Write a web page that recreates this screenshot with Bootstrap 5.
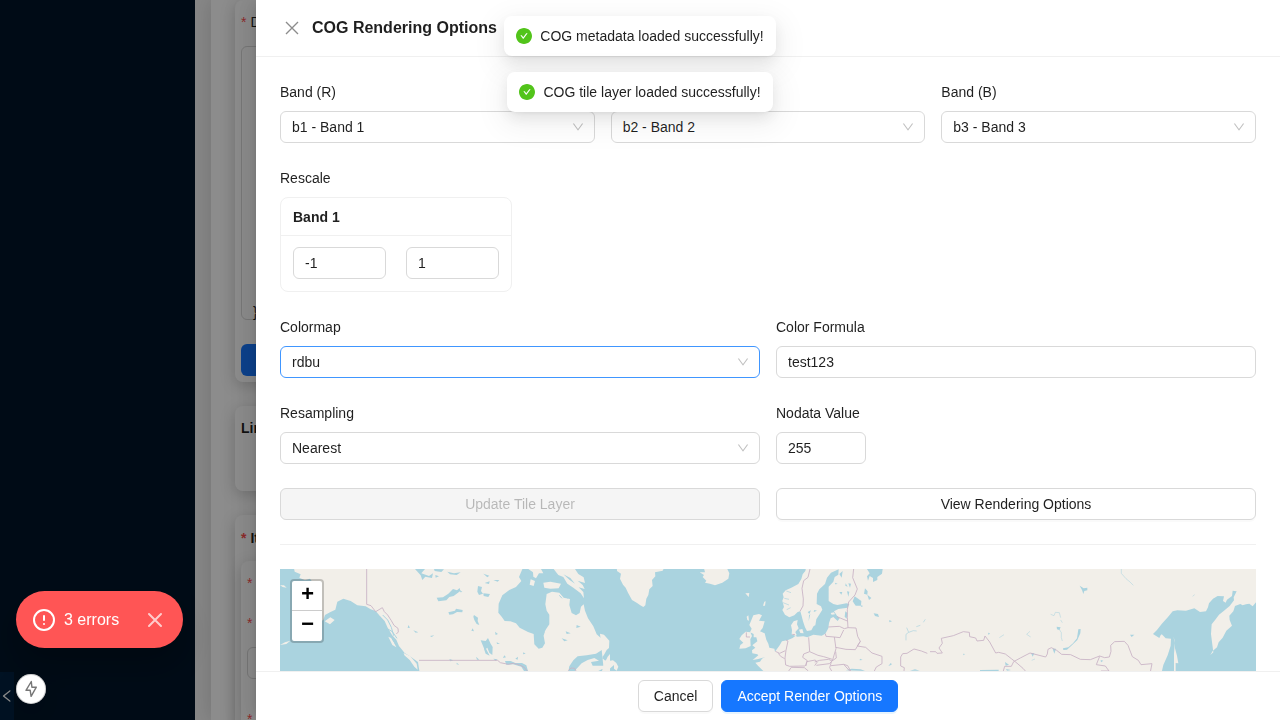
<!DOCTYPE html>
<html lang="en">
<head>
<meta charset="utf-8">
<meta name="viewport" content="width=device-width, initial-scale=1">
<title>COG Rendering Options</title>
<link href="https://cdn.jsdelivr.net/npm/bootstrap@5.3.0/dist/css/bootstrap.min.css" rel="stylesheet">
<style>
:root{--ink:rgba(0,0,0,.88);--line:#d9d9d9;--soft:#f0f0f0}
body{font:14px/22px "Liberation Sans",Arial,sans-serif;color:var(--ink);height:720px;overflow:hidden;background:#f5f5f5}
.sider{width:195px;background:#001529}
.trigger{width:14px;height:48px;background:#002140;color:#fff}
.page{margin-left:16px;background:#fff;box-shadow:0 0 20px rgba(0,0,0,.15);padding-left:24px}
.panel{border-radius:8px;box-shadow:0 4px 16px rgba(0,0,0,.2);background:#fff;padding:0 6px;margin-bottom:24px}
.inner{border-radius:8px;box-shadow:0 4px 16px rgba(0,0,0,.2);padding:9px 6px;height:200px}
.req{color:#ff4d4f;font-family:"Liberation Sans",sans-serif;margin-right:4px}
.field{border:1px solid var(--line);border-radius:6px;background:#fff;height:32px;padding:0 11px}
.dim{background:rgba(0,0,0,.45);z-index:5}
.sheet{left:256px;background:#fff;z-index:6;box-shadow:-6px 0 16px 0 rgba(0,0,0,.08),-3px 0 6px -4px rgba(0,0,0,.12),-9px 0 28px 8px rgba(0,0,0,.05)}
.sheet-head{height:57px;border-bottom:1px solid var(--soft);padding:0 28px 1px}
.sheet-head h1{font-size:16px;line-height:24px;font-weight:700;margin:0 0 0 12px}
.sheet-body{padding:24px 24px 0;min-height:0}
.sheet-foot{height:49px;border-top:1px solid var(--soft)}
.row{--bs-gutter-x:16px}
.item{margin-bottom:24px}
.item>label{display:block;margin-bottom:8px;height:22px}
.pick{display:flex;align-items:center;justify-content:space-between;padding-right:10px}
.pick svg{fill:rgba(0,0,0,.25);width:12px;height:12px}
.pick.hot{border-color:#4096ff}
.band{width:232px;height:95px;border:1px solid var(--soft);border-radius:8px}
.band-head{height:38px;border-bottom:1px solid var(--soft);padding:0 12px;font-weight:700}
.band-body{padding:11px 12px;gap:20px}
.num{line-height:30px}
.btn{font-size:14px;line-height:22px;padding:4px 15px;border-radius:6px;height:32px;--bs-btn-color:var(--ink);--bs-btn-border-color:#d9d9d9;--bs-btn-bg:#fff;box-shadow:0 2px 0 rgba(0,0,0,.02)}
.btn:disabled{opacity:1;background:#f5f5f5;color:rgba(0,0,0,.25);border-color:var(--line);box-shadow:none}
.btn-primary{--bs-btn-bg:#1677ff;--bs-btn-border-color:#1677ff;--bs-btn-color:#fff;box-shadow:0 2px 0 rgba(5,145,255,.1)}
.rule{height:1px;background:var(--soft);margin:24px 0}
.world{height:102px;background:#aad3df}
.zoomer{left:10px;top:10px;width:34px;border:2px solid rgba(0,0,0,.2);border-radius:4px;background-clip:padding-box;background-color:#fff}
.zoomer span{display:block;height:30px;font:bold 22px/30px "Liberation Mono",monospace;text-align:center;text-indent:1px;color:#000}
.zoomer span:first-child{border-bottom:1px solid #ccc}
.notes{top:16px;left:0;right:0;gap:16px;z-index:10}
.note{height:40px;padding:9px 12px;gap:8px;border-radius:8px;background:#fff;box-shadow:0 6px 16px 0 rgba(0,0,0,.08),0 3px 6px -4px rgba(0,0,0,.12),0 9px 28px 8px rgba(0,0,0,.05)}
.note svg{width:16px;height:16px;fill:#52c41a}
.dev{left:16px;top:591px;z-index:12;width:167px}
.errs{height:57px;border-radius:29px;background:#f55;color:#fff;font-size:16px;padding:0 16px;box-shadow:0 16px 32px rgba(0,0,0,.25)}
.bolt{width:30px;height:30px;margin-top:26px;border-radius:50%;background:#fff;box-shadow:0 0 0 1px rgba(120,120,120,.35) inset,0 11px 40px rgba(0,0,0,.25)}
</style>
</head>
<body>
<div class="d-flex h-100 overflow-hidden">
  <aside class="sider flex-shrink-0 d-flex align-items-end">
    <div class="trigger d-flex align-items-center justify-content-center"><svg width="14" height="14" viewBox="64 64 896 896" fill="currentColor"><path d="M724 218.3V141c0-6.7-7.7-10.4-12.9-6.3L260.3 486.8a31.86 31.86 0 000 50.3l450.8 352.1c5.3 4.1 12.9.4 12.9-6.3v-77.3c0-4.900-2.300-9.600-6.100-12.600l-360-281 360-281.100c3.800-3 6.100-7.700 6.100-12.600z"/></svg></div>
  </aside>
  <main class="page flex-grow-1 overflow-hidden">
    <section class="panel" style="height:382px">
      <div style="height:46px;padding-top:11px"><span class="req">*</span>D</div>
      <div class="field" style="height:274px;padding:254px 11px 0">}</div>
      <div class="rounded-2" style="height:32px;margin-top:24px;background:#1677ff"></div>
    </section>
    <section class="panel fw-bold" style="height:85px;padding-top:11px">Lin</section>
    <section class="panel" style="height:300px">
      <div class="fw-bold" style="height:46px;padding-top:12px"><span class="req">*</span>It</div>
      <div class="inner"><div class="req" style="line-height:26px">*</div><div class="req" style="line-height:26px;margin:14px 0 11px">*</div><div class="field"></div><div class="req" style="margin-top:30px;line-height:20px">*</div></div>
    </section>
  </main>
</div>
<div class="dim position-fixed top-0 start-0 w-100 h-100"></div>

<div class="sheet position-fixed top-0 bottom-0 end-0 d-flex flex-column">
  <header class="sheet-head d-flex align-items-center flex-shrink-0">
    <svg width="16" height="16" viewBox="0 0 16 16" stroke="#000" stroke-opacity=".45" stroke-width="1.350"><path d="M2 2 14 14M14 2 2 14"/></svg>
    <h1>COG Rendering Options</h1>
  </header>
  <div class="sheet-body flex-grow-1 overflow-hidden">
    <div class="row">
      <div class="col-4 item"><label>Band (R)</label><div class="field pick">b1 - Band 1<svg viewBox="64 64 896 896"><path id="chev" d="M884 256h-75c-5.100 0-9.900 2.500-12.900 6.600L512 654.200 227.900 262.600c-3-4.100-7.800-6.600-12.900-6.600h-75c-6.500 0-10.300 7.400-6.500 12.700l352.600 486.100c12.800 17.600 39 17.600 51.700 0l352.600-486.100c3.900-5.300.1-12.700-6.400-12.700z"/></svg></div></div>
      <div class="col-4 item"><label></label><div class="field pick">b2 - Band 2<svg viewBox="64 64 896 896"><use href="#chev"/></svg></div></div>
      <div class="col-4 item"><label>Band (B)</label><div class="field pick">b3 - Band 3<svg viewBox="64 64 896 896"><use href="#chev"/></svg></div></div>
    </div>
    <div class="item"><label>Rescale</label>
      <div class="band"><div class="band-head d-flex align-items-center">Band 1</div>
        <div class="band-body d-flex"><div class="field num flex-fill w-50">-1</div><div class="field num flex-fill w-50">1</div></div></div>
    </div>
    <div class="row">
      <div class="col-6 item"><label>Colormap</label><div class="field pick hot">rdbu<svg viewBox="64 64 896 896"><use href="#chev"/></svg></div></div>
      <div class="col-6 item"><label>Color Formula</label><div class="field num">test123</div></div>
      <div class="col-6 item"><label>Resampling</label><div class="field pick">Nearest<svg viewBox="64 64 896 896"><use href="#chev"/></svg></div></div>
      <div class="col-6 item"><label>Nodata Value</label><div class="field num" style="width:90px">255</div></div>
    </div>
    <div class="row">
      <div class="col-6"><button class="btn w-100" disabled>Update Tile Layer</button></div>
      <div class="col-6"><button class="btn w-100">View Rendering Options</button></div>
    </div>
    <div class="rule"></div>
    <div class="world position-relative overflow-hidden">
      <svg width="976" height="102" viewBox="0 0 976 102" class="d-block" fill="#f2efe9" stroke-linejoin="round">
        <!-- North America -->
        <g transform="translate(0 -4) scale(.33333)">
          <path d="M40 0 44 20 62 28 58 38 75 46 90 41 102 58 120 75 122 120 105 150 75 180 90 182 130 165 135 150 150 142 166 134 172 110 190 101 212 108 232 121 257 124 272 133 287 138 299 152 314 168 323 188 336 210 349 224 357 243 374 264 393 276 414 291 420 330H863L868 304 880 286 893 274 920 271 948 266 969 253 984 243 985 235 966 222 950 208 940 184 924 160 915 137 911 118 903 125 899 144 888 151 875 144 868 120 870 102 851 98 838 83 816 80 800 87 796 118 800 137 808 149 808 178 798 193 790 208 795 235 787 248 776 251 763 238 761 207 744 201 719 188 708 175 691 169 674 168 665 155 655 143 656 116 667 91 688 75 708 66 724 48 717 36 728 10 720 0z"/>
          <path d="M745 12 759 22 760 35 768 40 777 25 790 25 783 12zM752 43l13 5-4 15-12-4zM790 53l21-3 32 6-7 14-25 1-18-3zM821 12 835 30 850 36 862 56 880 68 902 85 912 100 910 81 896 67 914 72 908 60 893 47 915 54 911 37 895 27 885 12zM882 330l5-16 18-19 18-10 20-6 14 8-24 4 5 11 35 0 11-16-13 24-26 13zM966 318l5-18 12-25 7-8v60z"/>
          <path d="M0 61l12 0 8 7-12-2zM325 215l10 5 14 27-12-7zM371 264l20 10 19 22 3 18-10-9-14-20-16-14zM0 240l15-8 16-5-12 10zM134 169l17-12 13 8-14 13z"/>
        </g>
        <g transform="translate(0 -4) scale(.33333)" fill="#aad3df">
          <path d="M405 12l30 0-11 13 23 8 12-8-3 14-20-4-9 10-5-14zM470 98l19-1 16-11 14-14 12 4 8-7 2 9-20 15-13 3-9 10-24 3zM505 142l20-5 3-6 20 4-1 7-16-1-12 7-11 1zM582 150l12 8-1 10 5 12-8-3-7-12-3-10zM602 226l15 2 7-9 8 17 6 10-1 24-9-7-6-15-8 7zM612 237l8 18 9 17-12-6-5-14zM594 63l12 3-3 12 6 8-12 4-5-10zM614 54l15-5-2 8zM610 85l20 2-5 9-14-3zM462 12l30 1-8 8-20-3zM466 30l11 4-10 4zM610 26l18 6-6 5zM640 45l18 0-5 5zM502 20l20 5 20-3-12 8-20-2zM400 196l15 6-8 1zM450 213l13-2-8 5zM385 180l5 8-7 1zM650 232l10 4-9 1zM645 200l9 7-7 3zM706 281l8-6-1 9zM673 271l5 6-9 2zM730 262l7 4-8 2zM857 199l15 6-12 2zM845 220l18 6-10 3zM890 180l12 5-13 4zM578 190l4 9-8-2zM540 75l7 6-6 1zM508 282l12 4-9 3zM530 293l8 6-8-1zM588 275l10 9-7 0zM640 281l12 2-5 4zM675 288l17 0 14 6 20 0 13 7 5 17h-12l-8-13-25-7-20 1z"/>
          <path d="M300 155l9 13 10 24 3 14M308 150l15 15 11 22 7 25M320 190l17 10 14 20M335 220l15 22 10 11M172 118l10 16M193 104l8 14M838 91l8 9M852 88l10 12M903 101l6 15M890 82l12 12M820 18l10 20" fill="none" stroke="#aad3df" stroke-width="3"/>
          <path d="M780 184l11-5-5 10zM795 199l-9 6 5 7zM730 15l4 35 5-31zM850 28l20 18 15 10-14-17z"/>
        </g>
        <g transform="translate(0 -4) scale(.33333)" fill="none" stroke="#c8b3c5" stroke-width="2.600">
          <path d="M260 12V118L273 122 287 140 307 128 313 140 323 150 334 167 342 181 354 190 355 201 349 207M417 286H653L661 293 685 298 701 295 719 300 731 306 742 318M865 317l8-8 11 1 4 8"/>
        </g>
        <!-- Atlantic and Europe -->
        <g transform="translate(320 -4) scale(.33333)">
          <path d="M50 0 51 18 63 26 60 41 69 59 77 68 84 83 96 105 110 113 121 121 130 126 136 121 139 101 145 90 148 73 158 63 156 45 166 34 165 22 188 17 197 0zM299 22l16 0-3-12h69l7 15-3 16-18 12-22 8-15-5-15-3 4-6-11-11 4-6zM0 206l12 3 16 18-1 22-7 6-7 13-7 10 8 8 11 2 14-2 10 8 6 11-5 12-8-6 0-11-13 11-19-9zM436 85l12-1-2 12zM489 122l4-12 4-1-2 13zM440 155l5-4 2 16-5-2z"/>
          <path d="M460 151l17-4 9 4-9 16 17 2-6 20-8 10 14 6 5 19 6 12 3 12 15 3 3 14-12 11-26 2-13 4-17 3 17-14-3-3-15-3-1-9 10-8-9-7 15-12-3-12-8 0 0-10-11-5 5-11-7-11zM425 211l12-11 14 2 5 11-5 10 1 20-15 7-19 1 3-11 9-7-12-11z"/>
          <!-- Scandinavia -->
          <path d="M620 0 616 18 608 28 604 42 595 57 574 68 557 76 548 86 551 97 547 107 552 126 547 135 555 149 568 157 583 151 593 141 601 139 605 153 609 169 615 187 621 198 634 196 641 183 646 181 649 163 659 147 667 134 663 124 650 117 651 86 658 73 675 57 681 38 693 23 716 13 715 29 704 36 700 50 686 65 686 86 686 108 700 117 712 120 739 115 748 117 743 128 715 132 702 139 711 152 719 160 713 168 700 156 692 160 687 174 685 190 676 206 665 212 640 209 622 217 610 214 592 215 575 208 576 195 573 181 581 169 593 165 591 178 596 190 586 201 590 210 578 219 564 225 546 229 539 241 526 259 507 269 486 281 480 290 466 293 474 302 490 318V330H1000V0z"/>
          <path d="M597 194l10-2 4 13-10-1zM692 144l10-2 3 6-10 1z"/>
        </g>
        <g transform="translate(320 -4) scale(.33333)" fill="#aad3df">
          <path d="M801 12h47l-2 14-14 10 0 9-13 6 0-12-10-6-5 14-3-13 8-9zM764 94l20 14-1 14-16 0-9-13zM795 70l8 9-1 10-10-3zM802 89l12 10-7 6zM736 139l6 5-2 17-6-6zM718 27l10-9-3 20zM745 55l8 1-3 12zM821 145l13 2 3 9-12-3zM785 120l4 4-7 2zM623 141l10-5-5 11zM627 151l4-4-5 22zM643 135l8 2-10 4zM737 55l6 10-7-3zM706 53l7 4-8 1zM718 81l9 0-3 8zM741 79l7 1-3 15zM868 165l8 4-8 3zM865 303l8-10 2 6zM737 316l18-5 27 2 13 5zM780 281l8 4-9 1zM930 317l15-4 14 4z"/>
          <path d="M920 188l6 14-8 6 0 18M926 202l14-5 10 1M949 185l12-4M970 172l6-9M553 100l14 3M549 113l18 7M559 78l14 5M560 134l12-6" fill="none" stroke="#aad3df" stroke-width="2"/>
        </g>
        <g transform="translate(320 -4) scale(.33333)" fill="none" stroke="#c8b3c5" stroke-width="2.600">
          <path d="M630 12 624 37 611 47 606 70 610 102 609 123 600 139M761 12 758 38 772 72 765 90 746 111 742 134 742 157 744 188 733 191 718 184 685 186M711 155l31 13M676 206l2 8 25 2 17 2 11-23M703 216l5 35-11 37M744 188l24 1 5 25 8 15-15 25-28-1-31-6M781 229l-9 14 25 4 19 17 30 10 0 22-17 10-6 12M626 217l3 43 25 11 17 4 26 8M577 208l8 1M558 225l6 3-6 28-3 23 2 21 12 4 46-1M526 259l13 6 17-8M535 265l7 9 12 7M629 260l-18 7-3 10 14 10-5 16M617 303l3-13 26-5 5 7-7 10M644 291l15-5 27-3 10 5-8 8-39 5M696 288l13-9-2-19M694 291l-5 17 6 10M693 302l38-4 18 20M566 318l8-11 39 1 12 10M731 298l12 4 9 16M439 202v14h11M912 318l1-10-11-5 0-27 6-10 13-1 21-13 22 6 18 7"/>
        </g>
        <!-- East Asia -->
        <g transform="translate(650 -4) scale(.33333)">
          <path d="M0 0H990V115L978 112 968 124 958 116 948 118 938 121 931 117 915 123 910 139 898 152 899 165 906 182 889 197 878 218 866 232 861 247 848 258 841 270 850 262 846 231 843 207 845 178 857 163 867 149 882 137 899 123 912 106 911 97 920 79 908 77 906 93 891 104 887 113 879 108 882 94 863 93 849 101 837 115 834 127 828 139 810 141 793 130 768 137 742 136 728 139 714 156 695 177 681 195 669 207 688 219 694 206 707 220 723 221 722 242 713 271 700 300 693 330H0z"/>
          <path d="M728 214l6 12 1 24 6 22 4 23-8-1 0 24-5 12 0-64 3-40z"/>
        </g>
        <g transform="translate(650 -4) scale(.33333)" fill="#aad3df">
          <path d="M445 193l7-1-1 13-9 20-18 17-13 12-11 1-1-5 16-3 14-12 12-15zM449 62l12 8 11-2 0 8-9 2-3 9-4-12zM380 185l12 2-4 8-7-2zM368 251l10 0-5 15zM303 264l10 1-5 10zM600 209l13 0-8 7zM225 291l12 8-10 3zM150 315l56-1v5h-56zM228 312l15 3-12 2zM512 285l8 2-7 5zM174 203l6 2-4 5zM99 266l6 1-4 4zM693 202l3 6-7 3z"/>
          <path d="M574 12v13l14 16 12 10 10 10M362 148l10 4 4-10 12 1 4 15M392 165l5 8M386 190l8 13 0 15 3 10M300 199l-10 9 12 8M222 209l-14 9M305 286l10-4M788 94l6-5" fill="none" stroke="#aad3df" stroke-width="2" opacity=".8"/>
        </g>
        <g transform="translate(650 -4) scale(.33333)" fill="none" stroke="#c8b3c5" stroke-width="2.600">
          <path d="M0 260l17 0 4 5 16-1-10-15 10-14-3-15 36-8 30-12 18 2 1 13 18 4 4 9 20-2 4-13 14 18 18 33 9-2 20 5 18 14 14 11 21 18 8 9 1 16M220 318l4-14 20 0 7-14 20-11 29-15 47 12 5-9 2-14 10-5 16 8 15 12 27 1 29 14 30 1 28-11 15 5 14-2 5-17-1-18 12-11 29-1 11 12 13 34 18 11 8 13 33-3-5 25M509 274l-10 25 27 4 11 15h-24"/>
        </g>
      </svg>
      <div class="zoomer position-absolute"><span>+</span><span>−</span></div>
    </div>
  </div>
  <footer class="sheet-foot d-flex justify-content-center align-items-center gap-2 flex-shrink-0">
    <button class="btn">Cancel</button><button class="btn btn-primary">Accept Render Options</button>
  </footer>
</div>

<div class="notes position-fixed d-flex flex-column align-items-center">
  <div class="note d-flex align-items-center"><svg viewBox="64 64 896 896"><path id="ok" d="M512 64C264.600 64 64 264.600 64 512s200.600 448 448 448 448-200.600 448-448S759.400 64 512 64zm193.500 301.700l-210.600 292a31.800 31.800 0 01-51.700 0L318.500 484.900c-3.800-5.300 0-12.700 6.500-12.700h46.900c10.200 0 19.900 4.900 25.900 13.300l71.200 98.800 157.200-218c6-8.300 15.600-13.300 25.900-13.300H699c6.500 0 10.300 7.400 6.500 12.700z"/></svg>COG metadata loaded successfully!</div>
  <div class="note d-flex align-items-center"><svg viewBox="64 64 896 896"><use href="#ok"/></svg>COG tile layer loaded successfully!</div>
</div>

<div class="dev position-fixed">
  <div class="errs d-flex align-items-center">
    <svg width="24" height="24" viewBox="0 0 24 24" fill="none" stroke="#fff" stroke-width="2" stroke-linecap="round" class="me-2"><circle cx="12" cy="12" r="10"/><path d="M12 8v4M12 16h.01"/></svg>3 errors
    <svg width="24" height="24" viewBox="0 0 24 24" fill="none" stroke="#fff" stroke-width="2" stroke-linecap="round" opacity=".7" class="ms-auto"><path d="M18 6 6 18M6 6l12 12"/></svg>
  </div>
  <div class="bolt"><svg class="d-block" width="30" height="30" viewBox="0 0 30 30" fill="none" stroke="#777" stroke-width="1.400" stroke-linejoin="round"><path d="M15.300 7.500 10 16.300H14.200L15.100 22.300 20.300 13.200H15.900z"/></svg></div>
</div>
<script src="https://cdn.jsdelivr.net/npm/bootstrap@5.3.0/dist/js/bootstrap.bundle.min.js"></script>
</body>
</html>
